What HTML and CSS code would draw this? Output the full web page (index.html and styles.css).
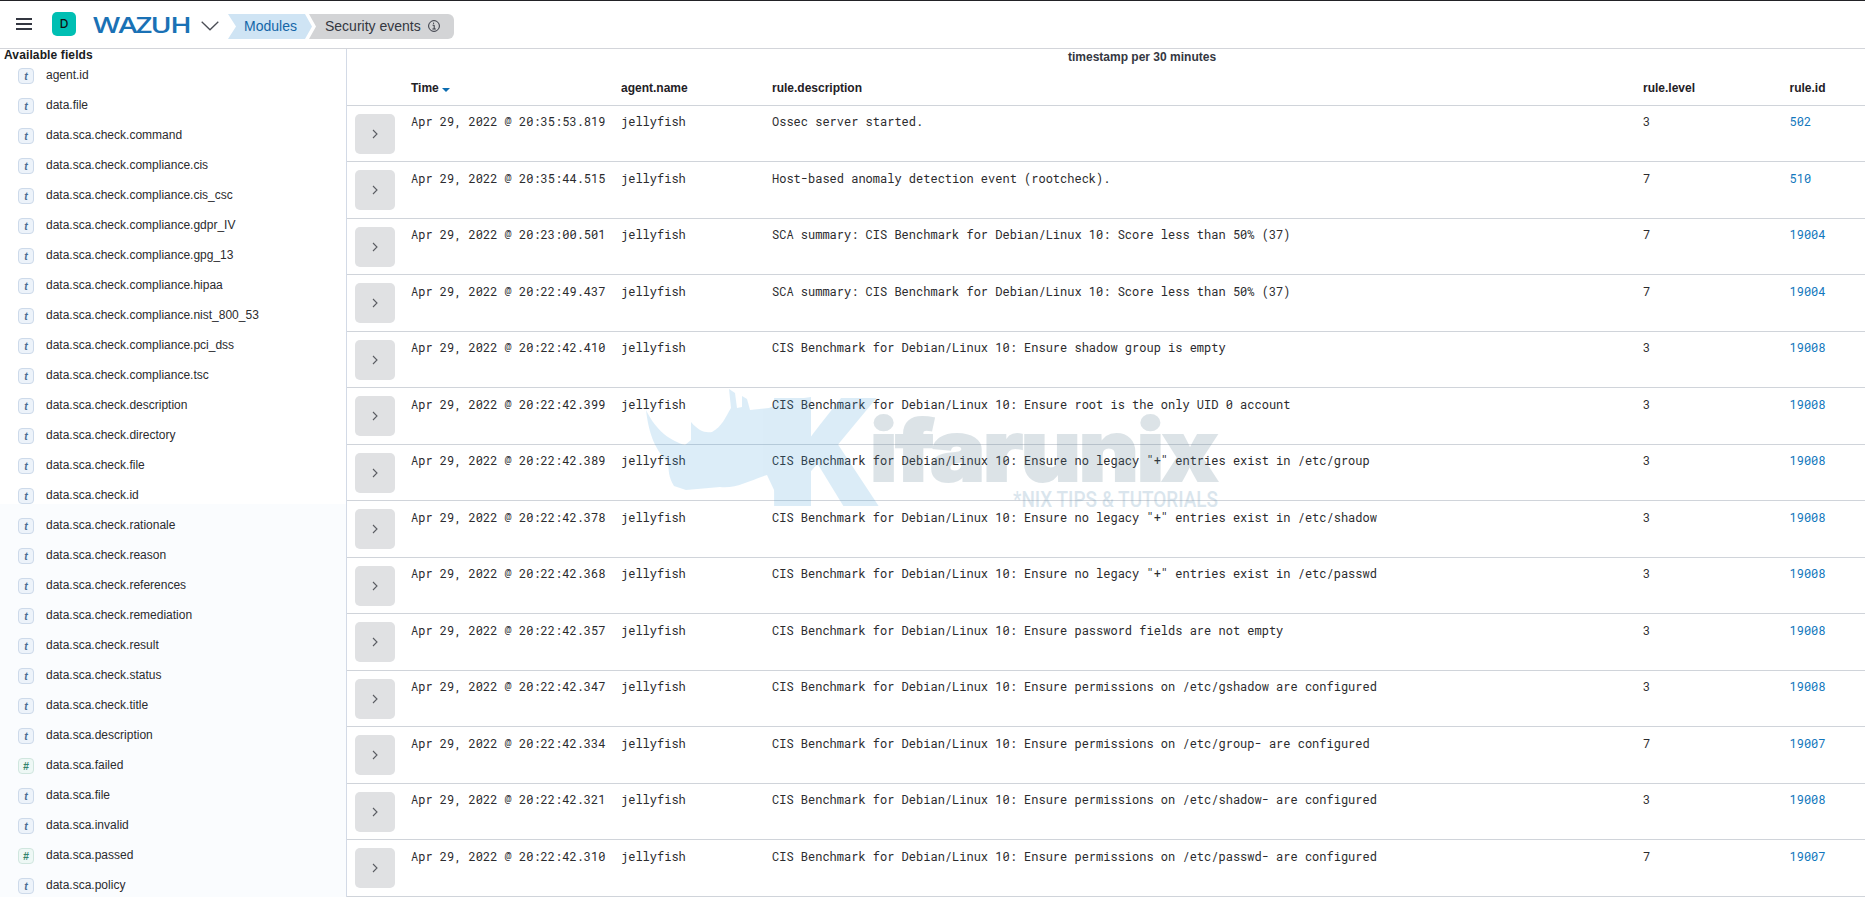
FILE: index.html
```
<!DOCTYPE html>
<html lang="en">
<head>
<meta charset="utf-8">
<title>Security events</title>
<link rel="stylesheet" href="styles.css">
</head>
<body>
<header class="topbar">
  <svg class="menu" viewBox="0 0 16 12"><path d="M0 1h16M0 6h16M0 11h16"/></svg>
  <span class="space">D</span>
  <svg class="logo" viewBox="0 0 98 16"><text x="0" y="15.2" textLength="97" lengthAdjust="spacingAndGlyphs">WAZUH</text></svg>
  <svg class="caret" viewBox="0 0 18 10"><path d="M.7.8 9 8.8 17.3.8"/></svg>
  <nav class="crumbs">
    <a class="crumb crumb-link">Modules</a>
    <span class="crumb crumb-current">Security events
      <svg class="info" viewBox="0 0 12 12"><circle cx="6" cy="6" r="5.4"/><path d="M4.6 5.2H6.2V9M4.4 9h3.4M5.6 2.6v1.3"/></svg>
    </span>
  </nav>
</header>
<div class="body">
  <aside class="fields">
    <h3 class="fields-title">Available fields</h3>
    <ul class="field-list" id="fields"></ul>
  </aside>
  <main class="results">
    <div class="axis-title">timestamp per 30 minutes</div>
    <div class="row head">
      <span></span><span>Time <i class="sort"></i></span><span>agent.name</span><span>rule.description</span><span>rule.level</span><span>rule.id</span>
    </div>
    <div id="rows"></div>
    <svg class="watermark" viewBox="0 0 590 130">
      <g class="wm-blue">
        <path d="M0 21C10 42 25 52 39 56L45 51V33C53 42 58 44 66 43C76 38 80 27 85 19L83 0L89 4L91 19L96 18V7L101 10L104 21L123 19L144 11L165 8V117H131L129 103L121 86C105 91 90 100 74 98L40 101L28 97C22 87 23 81 22 74C10 61 3 47 0 21Z"/>
        <text class="wm-k" x="121" y="117" textLength="115" lengthAdjust="spacingAndGlyphs">K</text>
      </g>
      <text class="wm-name" x="224" y="92" textLength="346" lengthAdjust="spacingAndGlyphs">ifarunix</text>
      <text class="wm-tag" x="367" y="118" textLength="205" lengthAdjust="spacingAndGlyphs">*NIX TIPS &amp; TUTORIALS</text>
    </svg>
  </main>
</div>
<script src="app.js"></script>
</body>
</html>
```
FILE: styles.css
```
* { box-sizing: border-box; }
body { margin: 0; height: 897px; overflow: hidden; background: #fff; color: #2b2b2e; font-family: "Liberation Sans", Arial, sans-serif; font-size: 12px; }
.topbar { height: 49px; display: flex; align-items: flex-start; border-top: 1px solid #222226; border-bottom: 1px solid #d3d5da; padding-left: 16px; }
.menu { width: 16px; height: 12px; margin-top: 17px; stroke: #343741; stroke-width: 2; }
.space { width: 24px; height: 24px; margin: 11px 0 0 20px; border-radius: 5px; background: #00bfb3; color: #111; font: 500 12px/24px Inter, sans-serif; text-align: center; }
.logo { width: 98px; height: 16px; margin: 17px 0 0 17px; overflow: visible; }
.logo text { font: 600 20.7px "Open Sans", sans-serif; letter-spacing: -1.2px; fill: #1a71b5; }
.caret { width: 18px; height: 10px; margin: 20px 0 0 10px; fill: none; stroke: #4a4d55; stroke-width: 1.3; }
.crumbs { display: flex; margin: 13px 0 0 9px; font-size: 14px; line-height: 25px; }
.crumb { height: 25px; white-space: nowrap; }
.crumb-link { width: 84px; padding-left: 16px; background: #cfe4f4; color: #1466a8; clip-path: polygon(0 0, 77px 0, 84px 50%, 77px 100%, 0 100%, 8px 50%); }
.crumb-current { width: 145px; margin-left: -3px; padding-left: 16px; display: flex; background: #d3d4d6; color: #343741; border-radius: 0 6px 6px 0; clip-path: polygon(0 0, 100% 0, 100% 100%, 0 100%, 7px 50%); }
.info { width: 12px; height: 12px; margin: 6px 0 0 7px; fill: none; stroke: #343741; stroke-width: 1; }
.body { display: flex; height: 848px; }
.fields { width: 347px; flex: none; border-right: 1px solid #d3dae6; background: linear-gradient(#fff 455px, #fafcfe 455px); overflow: hidden; }
.fields-title { margin: 0; padding-left: 4px; height: 11px; font-size: 12px; line-height: 12px; letter-spacing: .12px; color: #1a1c21; }
.field-list { list-style: none; margin: 0; padding: 0; }
.field { height: 30px; display: flex; align-items: center; padding-left: 18px; line-height: 14px; }
.token { width: 16px; height: 16px; margin: 2px 12px 0 0; border: 1px solid #cddaea; border-radius: 4px; background: #edf3fa; color: #4a6d94; font: italic bold 10.5px/14px "Liberation Sans", sans-serif; text-align: center; }
.token.num { color: #34836c; background: #eef8f5; border-color: #d0e6df; }
.results { flex: 1; position: relative; min-width: 0; }
.axis-title { height: 16px; padding-left: 721px; line-height: 16px; font-weight: bold; color: #343741; }
.row { height: 56.5px; display: grid; grid-template-columns: 64px 210px 151px 871px 146.5px 1fr; border-bottom: 1px solid #d0d4da; font-family: "Roboto Mono", "DejaVu Sans Mono", monospace; font-size: 12px; line-height: 18px; padding-top: 6.9px; white-space: pre; }
.row.head { height: 40.6px; padding-top: 14px; font: bold 12px/18px "Liberation Sans", sans-serif; color: #1f2126; }
.sort { display: inline-block; border: 4px solid transparent; border-top-color: #0b6cb0; border-bottom: 0; vertical-align: 0; }
.expand { width: 40px; height: 40px; margin: 1.3px 0 0 8px; padding: 0; border: 0; border-radius: 5px; background: #e0e1e3; display: grid; place-items: center; }
.expand svg { width: 6px; height: 10px; fill: none; stroke: #5a5c62; stroke-width: 1.1; }
.link { color: #1277bd; }
.watermark { position: absolute; left: 299px; top: 340px; width: 590px; height: 130px; overflow: visible; pointer-events: none; }
.wm-blue { fill: #45a0d8; opacity: .19; }
.wm-k { font: 900 149px Inter, sans-serif; }
.wm-name { font: 900 85px Inter, sans-serif; letter-spacing: -2px; fill: #55798c; stroke: #55798c; stroke-width: 2; opacity: .2; }
.wm-tag { font: 500 22px Roboto, sans-serif; fill: #6f9cba; opacity: .25; }
```
FILE: app.js
```
const check = ["command", "compliance.cis", "compliance.cis_csc", "compliance.gdpr_IV", "compliance.gpg_13", "compliance.hipaa", "compliance.nist_800_53", "compliance.pci_dss", "compliance.tsc", "description", "directory", "file", "id", "rationale", "reason", "references", "remediation", "result", "status", "title"];
const fields = ["agent.id", "data.file", ...check.map(n => "data.sca.check." + n),
  ...["description", "failed", "file", "invalid", "passed", "policy"].map(n => "data.sca." + n)];
const numeric = new Set(["data.sca.failed", "data.sca.passed"]);
document.getElementById("fields").innerHTML = fields.map(f =>
  `<li class="field"><span class="token${numeric.has(f) ? " num" : ""}">${numeric.has(f) ? "#" : "t"}</span>${f}</li>`).join("");

const cis = "CIS Benchmark for Debian/Linux 10: ";
const events = [
  ["20:35:53.819", "Ossec server started.", 3, 502],
  ["20:35:44.515", "Host-based anomaly detection event (rootcheck).", 7, 510],
  ["20:23:00.501", "SCA summary: " + cis + "Score less than 50% (37)", 7, 19004],
  ["20:22:49.437", "SCA summary: " + cis + "Score less than 50% (37)", 7, 19004],
  ["20:22:42.410", cis + "Ensure shadow group is empty", 3, 19008],
  ["20:22:42.399", cis + "Ensure root is the only UID 0 account", 3, 19008],
  ["20:22:42.389", cis + 'Ensure no legacy "+" entries exist in /etc/group', 3, 19008],
  ["20:22:42.378", cis + 'Ensure no legacy "+" entries exist in /etc/shadow', 3, 19008],
  ["20:22:42.368", cis + 'Ensure no legacy "+" entries exist in /etc/passwd', 3, 19008],
  ["20:22:42.357", cis + "Ensure password fields are not empty", 3, 19008],
  ["20:22:42.347", cis + "Ensure permissions on /etc/gshadow are configured", 3, 19008],
  ["20:22:42.334", cis + "Ensure permissions on /etc/group- are configured", 7, 19007],
  ["20:22:42.321", cis + "Ensure permissions on /etc/shadow- are configured", 3, 19008],
  ["20:22:42.310", cis + "Ensure permissions on /etc/passwd- are configured", 7, 19007]
];
document.getElementById("rows").innerHTML = events.map(([t, d, l, id]) =>
  `<div class="row"><button class="expand"><svg viewBox="0 0 6 10"><path d="M1 1l4 4-4 4"/></svg></button><span>Apr 29, 2022 @ ${t}</span><span>jellyfish</span><span>${d}</span><span>${l}</span><a class="link">${id}</a></div>`).join("");
```
